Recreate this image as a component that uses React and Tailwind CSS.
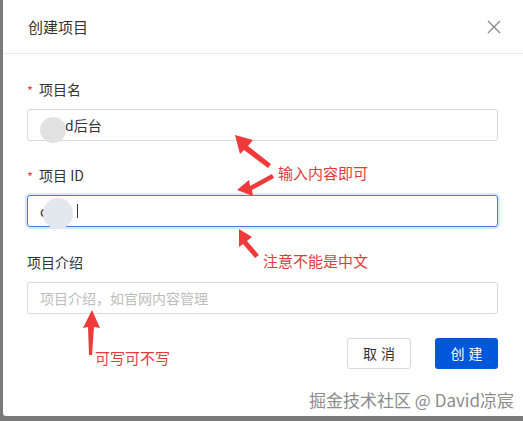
const font = { fontFamily: '"Noto Sans CJK SC", "Noto Sans", sans-serif' }

function Field({ label, required, children }) {
  return (
    <div className="flex flex-col">
      <div className="h-[22px] flex items-center text-[14px] text-[#333] mb-[9px]">
        {required && <span className="text-[#e5484d] mr-[6px] text-[13px] leading-none mt-[3px]">*</span>}
        <span>{label}</span>
      </div>
      {children}
    </div>
  )
}

function Blur({ className }) {
  return <div className={`absolute rounded-full bg-[#e2e2e2] ${className}`} />
}

export default function App() {
  return (
    <div className="w-[523px] h-[421px] bg-[#7a7a7a] pl-[3px] pb-[5px] overflow-hidden" style={font}>
      <div className="relative h-full bg-white rounded-bl-[3px] flex flex-col">
        {/* header */}
        <div className="h-[54px] border-b border-[#ececec] flex items-center justify-between pl-[25px] pr-[21px] shrink-0">
          <span className="text-[15px] text-[#333] mt-[1px]">创建项目</span>
          <svg width="14" height="14" viewBox="0 0 14 14" className="mr-[1px] mt-[1px]">
            <path d="M1 1 L13 13 M13 1 L1 13" stroke="#8a8a8a" strokeWidth="1.4" fill="none" />
          </svg>
        </div>

        {/* body */}
        <div className="flex flex-col gap-[23px] pl-[24px] pr-[25px] pt-[24px]">
          <Field label="项目名" required>
            <div className="relative h-[32px] border border-[#d9d9d9] rounded-[3px] flex items-center pl-[12px] text-[14px] text-[#333]">
              <span className="pl-[25px]">d后台</span>
              <Blur className="left-[12px] top-[7px] w-[26px] h-[26px]" />
            </div>
          </Field>
          <Field label="项目 ID" required>
            <div className="relative h-[32px] border border-[#3d7fe0] rounded-[3px] shadow-[0_0_0_2px_rgba(60,130,230,0.18)] flex items-center pl-[12px] text-[14px] text-[#333]">
              <span>c</span>
              <span className="ml-[30px] w-px h-[14px] bg-[#333]" />
              <Blur className="left-[15px] top-[2px] w-[30px] h-[31px] bg-[#e3e7ee]" />
            </div>
          </Field>
          <div className="mt-[1px]">
            <Field label="项目介绍">
              <div className="h-[32px] border border-[#d9d9d9] rounded-[3px] flex items-center pl-[12px] text-[14px] text-[#bdbdbd]">
                项目介绍，如官网内容管理
              </div>
            </Field>
          </div>
          <div className="flex justify-end gap-[24px] mt-[1px]">
            <button className="w-[64px] h-[31px] border border-[#d9d9d9] rounded-[3px] text-[14px] text-[#333] bg-white tracking-[4px] pl-[4px]">取消</button>
            <button className="w-[63px] h-[31px] rounded-[3px] text-[14px] text-white bg-[#0057d9] tracking-[4px] pl-[4px]">创建</button>
          </div>
        </div>

        {/* annotations */}
        <svg className="absolute left-[-3px] top-0 pointer-events-none" width="523" height="421" viewBox="0 0 523 421">
          <g fill="#f03a3a">
            <polygon points="235,135 253,140 248,146 271,164 268,168 244,150 240,154" />
            <polygon points="237,190 249,180 250,186 272,174 274,178 252,190 253,196" />
            <polygon points="239,229 252,237 247,241 259,255 255,258 243,244 239,247" />
            <polygon points="92,310 100,328 94,327 92,355 89,355 88,327 83,328" />
          </g>
        </svg>
        <div className="absolute left-[275px] top-[162px] text-[15px] text-[#e23b3b]">输入内容即可</div>
        <div className="absolute left-[260px] top-[250px] text-[15px] text-[#e23b3b]">注意不能是中文</div>
        <div className="absolute left-[92px] top-[347px] text-[15px] text-[#e23b3b]">可写可不写</div>

        {/* watermark */}
        <div
          className="absolute left-[306px] top-[387px] text-[17px] text-[#8c8c8c] whitespace-nowrap"
          style={{ textShadow: '0 0 1px #fff, 1px 1px 0 #fff, -1px -1px 0 #fff' }}
        >
          掘金技术社区 @ David凉宸
        </div>
      </div>
    </div>
  )
}
